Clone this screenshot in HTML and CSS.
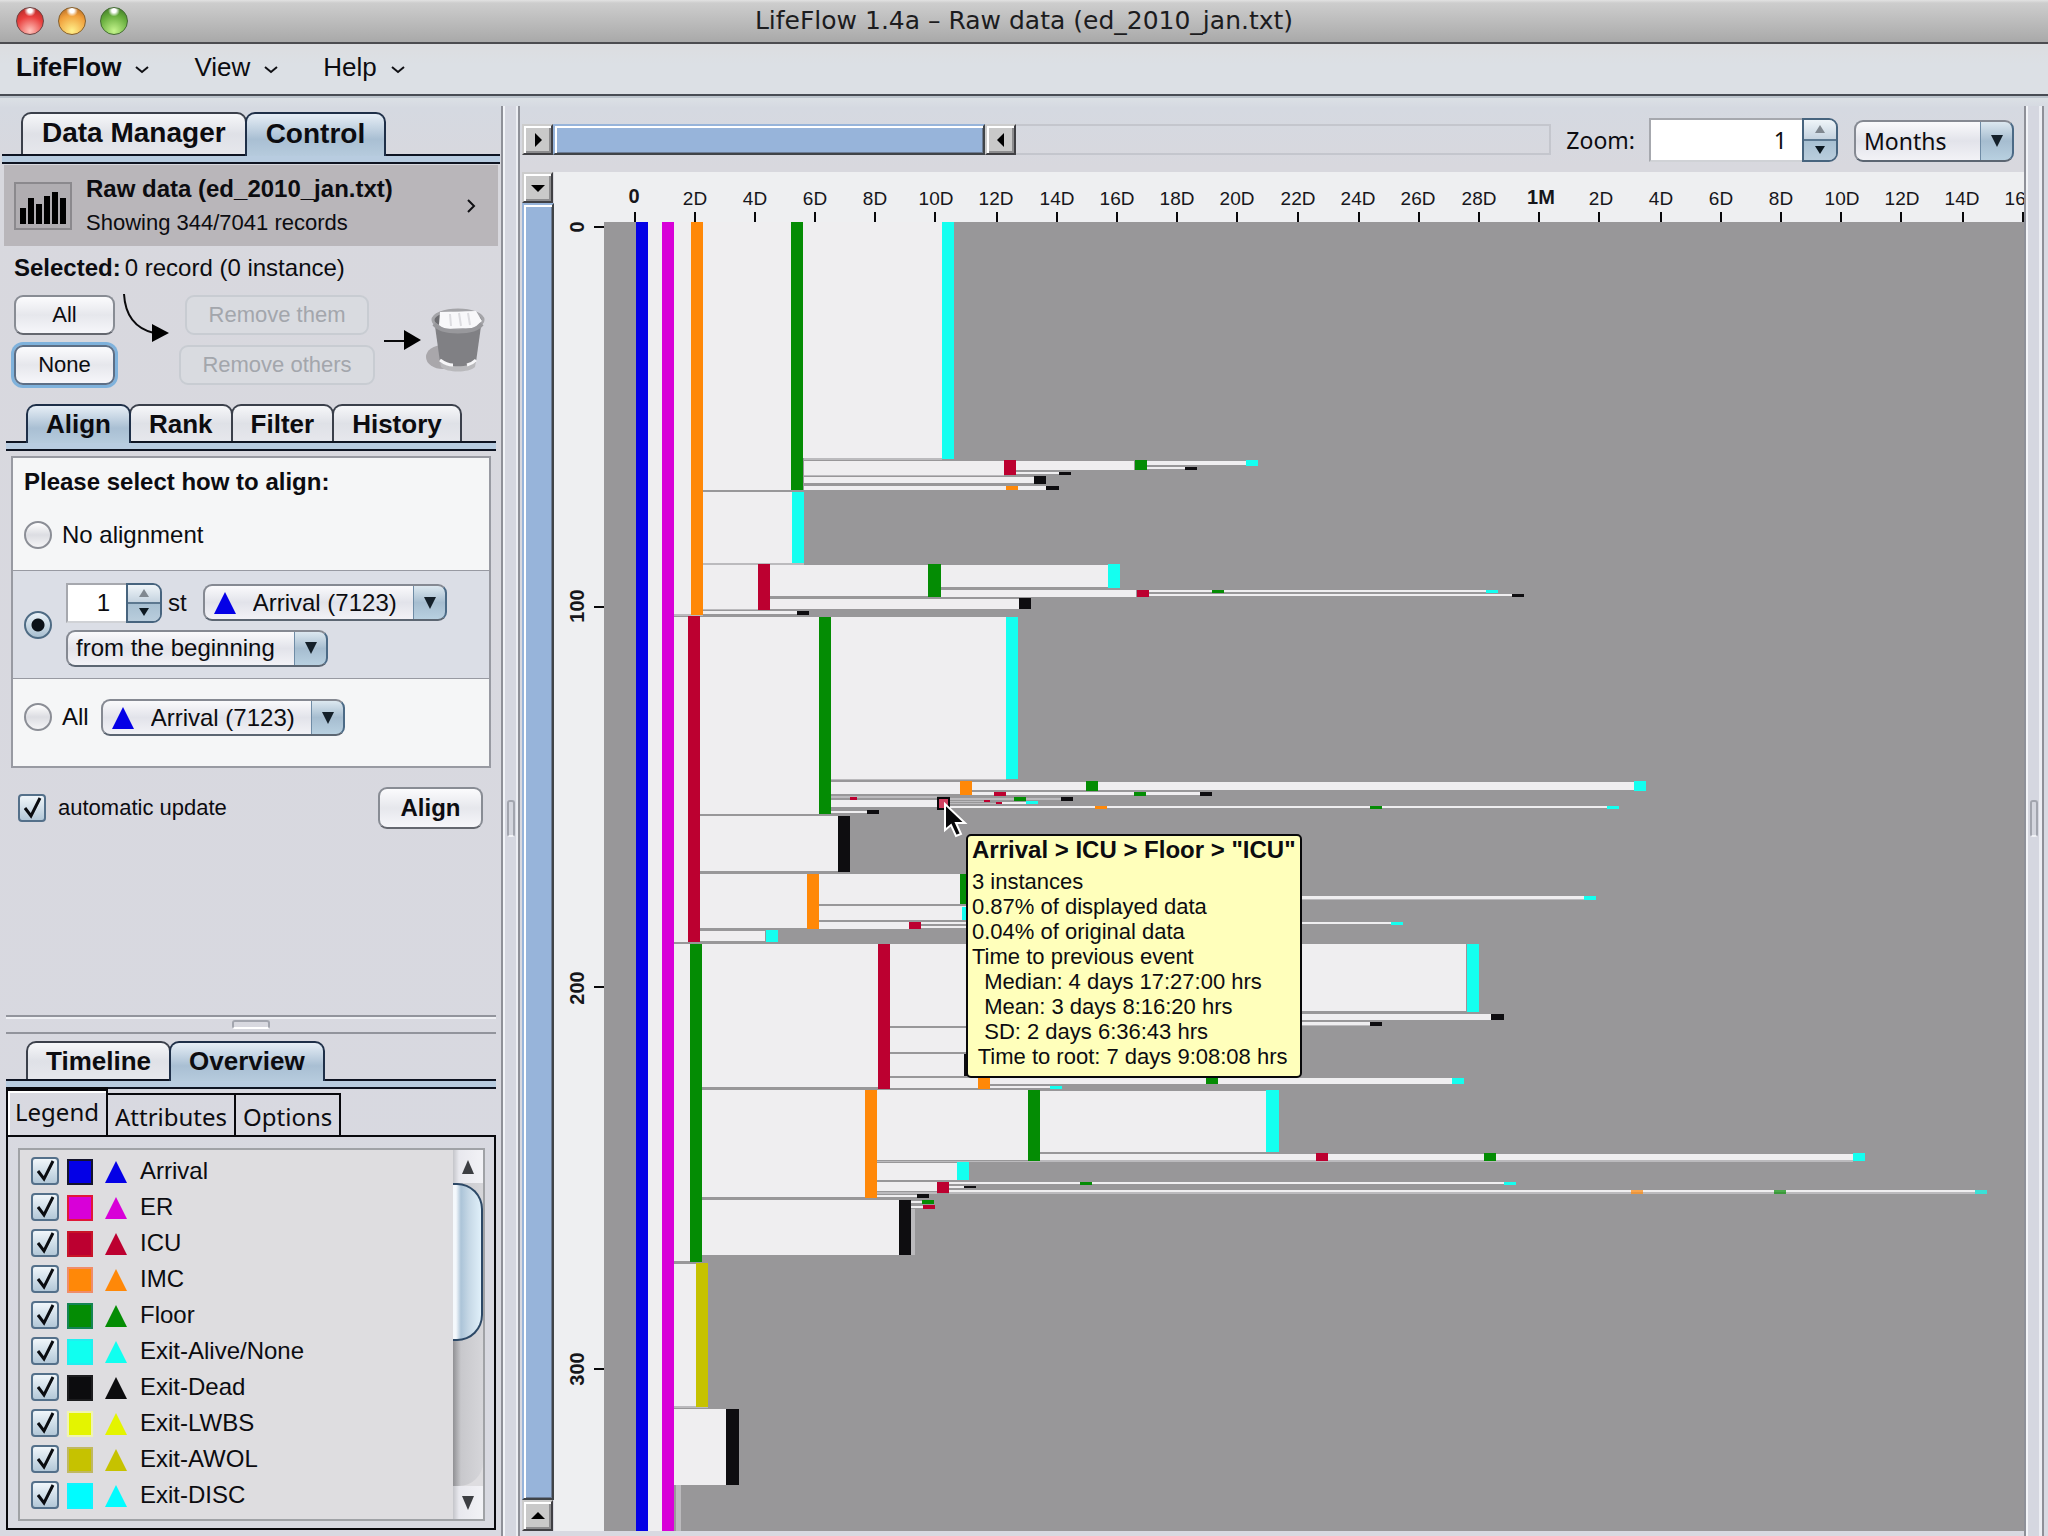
FILE: index.html
```html
<!DOCTYPE html>
<html lang="en">
<head>
<meta charset="utf-8">
<title>LifeFlow 1.4a – Raw data (ed_2010_jan.txt)</title>
<link rel="stylesheet" href="styles.css">
</head>
<body>
<header class="titlebar">
  <div class="lights">
    <button class="light red" aria-label="Close"></button>
    <button class="light amber" aria-label="Minimize"></button>
    <button class="light green" aria-label="Zoom window"></button>
  </div>
  <h1 class="window-title">LifeFlow 1.4a – Raw data (ed_2010_jan.txt)</h1>
</header>
<nav class="menubar">
  <button class="menu strong">LifeFlow <svg class="chevron" viewBox="0 0 14 8"><path d="M1 1l6 5 6-5"/></svg></button>
  <button class="menu">View <svg class="chevron" viewBox="0 0 14 8"><path d="M1 1l6 5 6-5"/></svg></button>
  <button class="menu">Help <svg class="chevron" viewBox="0 0 14 8"><path d="M1 1l6 5 6-5"/></svg></button>
</nav>
<main class="workspace">
  <aside class="sidebar">
    <section class="control-pane">
      <div class="tabs tabs-main" role="tablist">
        <button class="tab" role="tab">Data Manager</button>
        <button class="tab active" role="tab">Control</button>
      </div>
      <div class="tab-rule"></div>
      <div class="dataset">
        <svg class="bars-icon" viewBox="0 0 58 48"><rect x="1" y="1" width="56" height="46" fill="#b0adb1" stroke="#8b898d" stroke-width="2"/><path d="M6 26h6v16h-6zM14 16h6v26h-6zM22 22h6v20h-6zM30 14h6v28h-6zM38 10h6v32h-6zM46 16h6v26h-6z"/></svg>
        <div class="dataset-text">
          <strong class="dataset-name">Raw data (ed_2010_jan.txt)</strong>
          <span class="dataset-count">Showing 344/7041 records</span>
        </div>
        <svg class="go" viewBox="0 0 10 14"><path d="M2 1l6 6-6 6"/></svg>
      </div>
      <p class="selected"><strong>Selected:</strong> <span>0 record (0 instance)</span></p>
      <div class="selection">
        <div class="stack pick">
          <button class="btn">All</button>
          <button class="btn focused">None</button>
        </div>
        <svg class="arrow-curve" viewBox="0 0 60 60"><path d="M9 3c1 18 9 34 30 39" fill="none" stroke="#0a0a0c" stroke-width="2"/><path d="M37 33l17 9-17 9z"/></svg>
        <div class="stack remove">
          <button class="btn them" disabled>Remove them</button>
          <button class="btn" disabled>Remove others</button>
        </div>
        <svg class="arrow-straight" viewBox="0 0 38 20"><path d="M0 11h22" stroke="#0a0a0c" stroke-width="2"/><path d="M20 0l17 10-17 10z"/></svg>
        <svg class="trash" viewBox="0 0 60 66">
          <ellipse cx="18" cy="50" rx="17" ry="12" fill="#a9a7ab"/>
          <path d="M9 12l6 43c6 7 30 7 36 0l6-43z" fill="#808084"/>
          <path d="M15 54c6 7 30 7 36 0l-1 6c-6 6-28 6-34 0z" fill="#b9b9bc"/>
          <path d="M15 53c4 3 8 5 13 5M51 53c-3 3-5 4-9 5" stroke="#f6f6f8" stroke-width="3" fill="none"/>
          <ellipse cx="33" cy="13" rx="25" ry="10" fill="#6c6c70" stroke="#a4a4a8" stroke-width="3"/>
          <path d="M15 5l36-1 6 10-8 7-30 1-5-4z" fill="#f8f8fa"/>
          <path d="M25 7l1 12M34 6l2 13M43 6l2 12" stroke="#dcdce0" stroke-width="2"/>
          <path d="M9 17c8 10 40 10 48 0" stroke="#98989c" stroke-width="4" fill="none"/>
        </svg>
      </div>
      <div class="tabs tabs-tools" role="tablist">
        <button class="tab active" role="tab">Align</button>
        <button class="tab" role="tab">Rank</button>
        <button class="tab" role="tab">Filter</button>
        <button class="tab" role="tab">History</button>
      </div>
      <div class="tab-rule inset"></div>
      <form class="align-form">
        <fieldset class="align-box">
          <div class="align-row row-none">
            <h2 class="align-title">Please select how to align:</h2>
            <label class="choice"><input class="radio" type="radio" name="align"> No alignment</label>
          </div>
          <div class="align-row row-nth">
            <input class="radio" type="radio" name="align" checked aria-label="Align by occurrence">
            <div class="nth">
              <div class="nth-line">
                <span class="spinner spinner-small"><input class="spin-text" type="text" value="1" aria-label="Occurrence"><span class="spin-buttons"><button type="button" class="spin up" aria-label="Increase"></button><button type="button" class="spin down" aria-label="Decrease"></button></span></span>
                <span>st</span>
                <span class="combo-icon"><select class="combo with-icon" aria-label="Event type"><option>Arrival (7123)</option></select><svg class="combo-mark" viewBox="0 0 22 22"><path d="M11 0l11 22H0z"/></svg></span>
              </div>
              <select class="combo combo-from" aria-label="Direction"><option>from the beginning</option></select>
            </div>
          </div>
          <div class="align-row row-all">
            <label class="choice"><input class="radio" type="radio" name="align"> All</label>
            <span class="combo-icon"><select class="combo with-icon" aria-label="Event type for all"><option>Arrival (7123)</option></select><svg class="combo-mark" viewBox="0 0 22 22"><path d="M11 0l11 22H0z"/></svg></span>
          </div>
        </fieldset>
        <div class="align-foot">
          <label class="auto"><input class="check" type="checkbox" checked> automatic update</label>
          <button class="btn btn-align" type="button">Align</button>
        </div>
      </form>
    </section>
    <section class="overview-pane">
      <div class="splitter-h"><span class="grip-h"></span></div>
      <div class="tabs tabs-overview" role="tablist">
        <button class="tab" role="tab">Timeline</button>
        <button class="tab active" role="tab">Overview</button>
      </div>
      <div class="tab-rule inset"></div>
      <div class="subtabs" role="tablist">
        <button class="subtab current" role="tab">Legend</button>
        <button class="subtab" role="tab">Attributes</button>
        <button class="subtab" role="tab">Options</button>
      </div>
      <div class="legend-panel">
        <div class="legend-box">
          <ul class="legend">
            <li><label class="item arrival"><input class="check" type="checkbox" checked><i class="swatch"></i><svg class="mark" viewBox="0 0 22 22"><path d="M11 0l11 22H0z"/></svg>Arrival</label></li>
            <li><label class="item er"><input class="check" type="checkbox" checked><i class="swatch"></i><svg class="mark" viewBox="0 0 22 22"><path d="M11 0l11 22H0z"/></svg>ER</label></li>
            <li><label class="item icu"><input class="check" type="checkbox" checked><i class="swatch"></i><svg class="mark" viewBox="0 0 22 22"><path d="M11 0l11 22H0z"/></svg>ICU</label></li>
            <li><label class="item imc"><input class="check" type="checkbox" checked><i class="swatch"></i><svg class="mark" viewBox="0 0 22 22"><path d="M11 0l11 22H0z"/></svg>IMC</label></li>
            <li><label class="item floor"><input class="check" type="checkbox" checked><i class="swatch"></i><svg class="mark" viewBox="0 0 22 22"><path d="M11 0l11 22H0z"/></svg>Floor</label></li>
            <li><label class="item alive"><input class="check" type="checkbox" checked><i class="swatch"></i><svg class="mark" viewBox="0 0 22 22"><path d="M11 0l11 22H0z"/></svg>Exit-Alive/None</label></li>
            <li><label class="item dead"><input class="check" type="checkbox" checked><i class="swatch"></i><svg class="mark" viewBox="0 0 22 22"><path d="M11 0l11 22H0z"/></svg>Exit-Dead</label></li>
            <li><label class="item lwbs"><input class="check" type="checkbox" checked><i class="swatch"></i><svg class="mark" viewBox="0 0 22 22"><path d="M11 0l11 22H0z"/></svg>Exit-LWBS</label></li>
            <li><label class="item awol"><input class="check" type="checkbox" checked><i class="swatch"></i><svg class="mark" viewBox="0 0 22 22"><path d="M11 0l11 22H0z"/></svg>Exit-AWOL</label></li>
            <li><label class="item disc"><input class="check" type="checkbox" checked><i class="swatch"></i><svg class="mark" viewBox="0 0 22 22"><path d="M11 0l11 22H0z"/></svg>Exit-DISC</label></li>
          </ul>
          <div class="scrollbar">
            <button class="scroll-arrow" aria-label="Scroll up"><svg viewBox="0 0 12 14"><path d="M6 0l6 14H0z"/></svg></button>
            <div class="scroll-track"><div class="scroll-thumb"></div></div>
            <button class="scroll-arrow" aria-label="Scroll down"><svg viewBox="0 0 12 14"><path d="M6 14l6-14H0z"/></svg></button>
          </div>
        </div>
      </div>
    </section>
  </aside>
  <div class="splitter-v"><span class="grip-v"></span></div>
  <section class="viewer">
    <div class="toolbar">
      <div class="range range-x">
        <button class="bevel" aria-label="Range start"><svg viewBox="0 0 14 14"><path d="M4 0l7 7-7 7z"/></svg></button>
        <div class="range-thumb"></div>
        <button class="bevel" aria-label="Range end"><svg viewBox="0 0 14 14"><path d="M10 0l-7 7 7 7z"/></svg></button>
        <div class="range-rest"></div>
      </div>
      <label class="zoom-label" for="zoom">Zoom:</label>
      <span class="spinner spinner-large"><input class="spin-text" id="zoom" type="text" value="1"><span class="spin-buttons"><button class="spin up" aria-label="Increase zoom"></button><button class="spin down" aria-label="Decrease zoom"></button></span></span>
      <select class="combo combo-unit" aria-label="Time unit"><option>Months</option></select>
    </div>
    <div class="canvas">
      <div class="range range-y">
        <button class="bevel" aria-label="Range top"><svg viewBox="0 0 14 14"><path d="M0 4l7 7 7-7z"/></svg></button>
        <div class="range-thumb"></div>
        <button class="bevel" aria-label="Range bottom"><svg viewBox="0 0 14 14"><path d="M0 10l7-7 7 7z"/></svg></button>
      </div>
      <div class="plot">
        <svg class="chart" width="100%" height="100%">
          <rect class="field" x="50" y="50" width="100%" height="100%"/>
          <g transform="translate(-554 -172)">
            <path class="ticks" d="M634 212h2v10h-2zM694 212h2v10h-2zM754 212h2v10h-2zM814 212h2v10h-2zM874 212h2v10h-2zM934 212h2v10h-2zM996 212h2v10h-2zM1056 212h2v10h-2zM1116 212h2v10h-2zM1176 212h2v10h-2zM1236 212h2v10h-2zM1297 212h2v10h-2zM1358 212h2v10h-2zM1418 212h2v10h-2zM1478 212h2v10h-2zM1538 212h2v10h-2zM1598 212h2v10h-2zM1660 212h2v10h-2zM1720 212h2v10h-2zM1780 212h2v10h-2zM1840 212h2v10h-2zM1900 212h2v10h-2zM1962 212h2v10h-2zM2022 212h2v10h-2zM594 226h10v2h-10zM594 606h10v2h-10zM594 986h10v2h-10zM594 1368h10v2h-10z"/>
            <g class="axis">
              <text class="major" x="634" y="203">0</text>
              <text x="695" y="205">2D</text><text x="755" y="205">4D</text><text x="815" y="205">6D</text><text x="875" y="205">8D</text><text x="936" y="205">10D</text><text x="996" y="205">12D</text><text x="1057" y="205">14D</text><text x="1117" y="205">16D</text><text x="1177" y="205">18D</text><text x="1237" y="205">20D</text><text x="1298" y="205">22D</text><text x="1358" y="205">24D</text><text x="1418" y="205">26D</text><text x="1479" y="205">28D</text>
              <text class="major" x="1541" y="204">1M</text>
              <text x="1601" y="205">2D</text><text x="1661" y="205">4D</text><text x="1721" y="205">6D</text><text x="1781" y="205">8D</text><text x="1842" y="205">10D</text><text x="1902" y="205">12D</text><text x="1962" y="205">14D</text><text x="2022" y="205">16D</text>
              <text class="major" transform="translate(584 227) rotate(-90)">0</text>
              <text class="major" transform="translate(584 606) rotate(-90)">100</text>
              <text class="major" transform="translate(584 988) rotate(-90)">200</text>
              <text class="major" transform="translate(584 1369) rotate(-90)">300</text>
            </g>
            <!-- paths between events -->
            <path class="flow" d="M648 222h14v1309h-14zM674 222h17v392h-17zM703 222h88v268h-88zM803 222h139v236h-139z
              M804 461h200v14h-200zM1016 461h118v9h-118zM1147 461h99v4h-99zM1147 467h38v2h-38zM1016 472h43v2h-43zM804 477h230v6h-230zM804 486h242v4h-242z
              M703 492h89v71h-89zM703 565h55v44h-55zM770 565h158v31h-158zM941 565h167v22h-167zM941 590h195v7h-195zM1149 590h337v2h-337zM1149 594h363v2h-363zM770 599h249v10h-249zM703 611h94v3h-94z
              M674 617h14v325h-14zM700 617h119v197h-119zM831 617h175v162h-175z
              M831 782h129v12h-129zM972 782h662v8h-662zM972 792h228v3h-228zM831 800h106v7h-106zM949 806h658v2h-658zM1002 802h24v2h-24zM831 811h36v2h-36z
              M700 816h138v55h-138zM700 874h107v54h-107zM818 874h150v30h-150zM818 906h150v14h-150zM818 922h91v7h-91zM921 922h47v2h-47zM921 926h47v2h-47zM1300 896h284v3h-284zM1300 922h91v2h-91zM700 931h65v10h-65z
              M674 944h16v317h-16zM702 944h176v143h-176zM889 944h81v82h-81zM970 944h496v67h-496zM970 1014h521v6h-521zM970 1022h400v3h-400zM889 1028h80v24h-80zM889 1054h75v22h-75zM889 1078h89v10h-89zM990 1078h462v6h-462zM990 1086h60v2h-60z
              M702 1090h163v107h-163zM877 1090h151v70h-151zM1040 1091h226v61h-226zM1040 1154h813v6h-813zM877 1163h80v17h-80zM877 1182h61v9h-61zM949 1182h555v2h-555zM949 1186h15v2h-15zM949 1190h1026v2h-1026zM877 1195h40v2h-40z
              M702 1200h197v55h-197zM911 1201h11v2h-11zM911 1206h12v2h-12zM674 1264h22v142h-22zM674 1409h52v76h-52z"/>
            <path class="flow-faint" d="M831 779h175v1h-175zM831 796h106v2h-106zM949 798h112v2h-112zM949 801h35v1h-35zM949 803h47v1h-47zM949 1192h1026v2h-1026zM1300 899h284v1h-284zM1300 1025h70v1h-70zM1040 1160h813v2h-813zM911 1209h4v46h-4zM676 1485h5v46h-5zM804 458h138v2h-138zM703 563h101v2h-101zM703 609h67v1h-67zM674 614h29v2h-29zM804 475h200v1h-200zM674 1406h34v2h-34zM877 1161h163v1h-163zM877 1192h60v2h-60z"/>
            <!-- event bars -->
            <path class="c-arrival" d="M636 222h12v1309h-12z"/>
            <path class="c-er" d="M662 222h12v1309h-12z"/>
            <path class="c-imc" d="M691 222h12v393h-12zM1006 486h12v4h-12zM960 781h12v14h-12zM1095 806h12v3h-12zM807 874h12v55h-12zM978 1070h12v19h-12zM865 1090h12v108h-12z"/>
            <path class="c-floor" d="M791 222h12v268h-12zM1135 460h12v10h-12zM928 564h13v33h-13zM1212 590h12v3h-12zM819 617h12v197h-12zM1086 781h12v10h-12zM1134 792h12v4h-12zM1014 797h12v4h-12zM1370 806h12v3h-12zM960 874h12v30h-12zM690 944h12v318h-12zM1206 1070h12v14h-12zM1028 1090h12v71h-12zM1484 1153h12v8h-12zM1080 1182h12v3h-12zM922 1200h12v4h-12z"/>
            <path class="c-icu" d="M1004 460h12v15h-12zM758 564h12v46h-12zM1137 590h12v7h-12zM688 616h12v326h-12zM994 792h12v4h-12zM850 797h7v3h-7zM984 800h6v2h-6zM996 802h6v2h-6zM909 922h12v7h-12zM878 944h12v145h-12zM1316 1153h12v8h-12zM937 1182h12v11h-12zM923 1205h12v4h-12z"/>
            <path class="c-alive" d="M942 222h12v237h-12zM1246 460h12v6h-12zM792 492h12v71h-12zM1108 564h12v24h-12zM1486 590h12v3h-12zM1006 617h12v162h-12zM1634 781h12v10h-12zM1026 801h12v3h-12zM1607 806h12v3h-12zM962 907h12v13h-12zM1584 896h12v4h-12zM1391 922h12v3h-12zM766 930h12v12h-12zM1467 944h12v68h-12zM1452 1078h12v6h-12zM1050 1086h12v3h-12zM1266 1090h13v62h-13zM1853 1153h12v8h-12zM957 1162h12v18h-12zM1504 1182h12v3h-12z"/>
            <path class="c-dead" d="M1185 467h12v3h-12zM1059 472h12v3h-12zM1034 476h12v8h-12zM1046 486h13v4h-13zM1512 594h12v3h-12zM1019 598h12v11h-12zM797 611h12v4h-12zM1200 792h12v4h-12zM1061 797h12v4h-12zM867 810h12v4h-12zM838 816h12v56h-12zM1491 1014h13v6h-13zM1370 1022h12v4h-12zM964 1054h12v22h-12zM964 1186h12v2h-12zM917 1194h12v4h-12zM899 1200h12v55h-12zM726 1409h13v76h-13z"/>
            <path class="c-awol" d="M696 1263h12v144h-12z"/>
            <path class="c-imc faded" d="M1631 1190h12v4h-12z"/>
            <path class="c-floor faded" d="M1774 1190h12v4h-12z"/>
            <path class="c-alive faded" d="M1975 1190h12v4h-12z"/>
            <rect class="picked" x="938" y="798" width="11" height="11"/>
            <path class="pointer" d="M945 804v26l6-5 5 11 5-2-5-11h9z"/>
          </g>
        </svg>
        <div class="tooltip" role="tooltip">
          <strong class="tip-title">Arrival &gt; ICU &gt; Floor &gt; "ICU"</strong>
          <pre class="tip-body">3 instances
0.87% of displayed data
0.04% of original data
Time to previous event
  Median: 4 days 17:27:00 hrs
  Mean: 3 days 8:16:20 hrs
  SD: 2 days 6:36:43 hrs
 Time to root: 7 days 9:08:08 hrs</pre>
        </div>
      </div>
    </div>
  </section>
  <div class="splitter-v splitter-edge"><span class="grip-v"></span></div>
</main>
</body>
</html>
```
FILE: styles.css
```css
* { box-sizing: border-box; }

body {
  margin: 0;
  height: 100vh;
  display: flex;
  flex-direction: column;
  overflow: hidden;
  background: #d8d9e0;
  color: #0c0c10;
  font: 24px/26px "Liberation Sans", Arial, sans-serif;
}

button, input, select { font: inherit; color: inherit; margin: 0; padding: 0; border: 0; background: none; }
h1, h2, p, ul, pre, fieldset { margin: 0; padding: 0; border: 0; }
svg { display: block; flex: none; }

/* window frame */
.titlebar {
  height: 44px;
  display: grid;
  grid-template-columns: 1fr auto 1fr;
  align-items: center;
  background: linear-gradient(#e2e2e2 0, #cdcdcd 3px, #a9a9a9);
  border-bottom: 2px solid #4c4c50;
}
.lights { display: flex; gap: 14px; padding-left: 16px; }
.light { width: 28px; height: 28px; border-radius: 50%; border: 1px solid #6b4444; }
.red { background: radial-gradient(circle at 50% 10%, #fff 0 8%, transparent 22%), radial-gradient(circle at 50% 88%, #ffc4bc, #e9403e 55%, #a82420); }
.amber { background: radial-gradient(circle at 50% 10%, #fff 0 8%, transparent 22%), radial-gradient(circle at 50% 88%, #fff08a, #f0a03c 60%, #a85c1c); border-color: #86602c; }
.green { background: radial-gradient(circle at 50% 10%, #fff 0 8%, transparent 22%), radial-gradient(circle at 50% 88%, #c4f48c, #66ac3c 60%, #346c20); border-color: #446c34; }
.window-title { font: 25px/32px "DejaVu Sans", sans-serif; color: #1c1c1e; }

.menubar {
  height: 52px;
  display: flex;
  align-items: flex-start;
  gap: 45px;
  padding: 8px 16px;
  background: linear-gradient(#dcdde0, #dce0e5 20px);
  border-bottom: 2px solid #484c54;
}
.menu { display: flex; align-items: center; gap: 14px; font-size: 26px; line-height: 30px; }
.strong { font-weight: bold; }
.chevron { width: 14px; height: 8px; margin-top: 5px; fill: none; stroke: #101014; stroke-width: 2; }

.workspace {
  flex: 1;
  min-height: 0;
  display: grid;
  grid-template-columns: 501px 19px minmax(0, 1fr) 24px;
  background: linear-gradient(#bcc4cc 0 2px, #dbe0e5 2px, #d5d9e1 12px, #d8d8de 70px, #d8d9e1);
}

/* splitters */
.splitter-v {
  margin-top: 10px;
  display: flex;
  justify-content: center;
  background: linear-gradient(90deg, #8e9098 0 2px, #f2f4f8 2px 4px, #d5d7e0 4px 15px, #eceef3 15px 17px, #8e9098 17px);
}
.splitter-edge { background: linear-gradient(90deg, #8e9098 0 2px, #f2f4f8 2px 4px, #d5d7e0 4px 15px, #eceef3 15px 18px, #8e9098 18px 20px, #d8dae2 20px); padding-right: 4px; }
.grip-v { width: 8px; height: 37px; margin-top: 694px; border: 2px solid #a2a5ae; border-radius: 3px; background: #d4d6de; border-bottom-color: #f0f1f5; }
.splitter-h { height: 19px; margin: 0 5px 0 6px; border-top: 2px solid #92949c; border-bottom: 2px solid #92949c; box-shadow: inset 0 2px #eff0f4; display: flex; justify-content: center; align-items: center; }
.grip-h { width: 38px; height: 9px; border: 2px solid #a2a5ae; border-bottom-color: #fff; border-radius: 3px; }

/* tabs */
.sidebar { display: flex; flex-direction: column; min-height: 0; }
.tabs { display: flex; }
.tab {
  font-weight: bold;
  border: 2px solid #3a3f4a;
  border-bottom: 0;
  border-radius: 10px 10px 0 0;
  margin-right: -2px;
  background: linear-gradient(#f6f7f9, #dfe1e7 50%, #e6e7ec);
}
.tab.active { background: linear-gradient(#e6eef6, #a9bfd3 60%, #b6cbdd); border-color: #1e2f48; position: relative; margin-bottom: -2px; padding-bottom: 2px; }
.tabs-main { height: 42px; margin-top: 16px; padding-left: 21px; font-size: 28px; }
.tabs-main .tab { padding-inline: 19px; padding-bottom: 2px; }
.tabs-tools { height: 37px; margin-top: 19px; padding-left: 26px; font-size: 26px; }
.tabs-tools .tab { padding-inline: 18px; }
.tabs-overview { height: 38px; margin-top: 7px; padding-left: 26px; font-size: 26px; }
.tabs-overview .tab { padding-inline: 18px; }
.tab-rule { height: 10px; margin: 0 1px 0 2px; background: #b8cce0; border: solid #0e1422; border-width: 2px 0; }
.tab-rule.inset { margin: 0 5px 0 6px; }

/* dataset summary and selection */
.dataset { height: 81px; margin: 1px 3px 0 4px; padding: 0 22px 0 10px; display: flex; align-items: center; gap: 14px; background: #b9b6ba; }
.bars-icon { width: 58px; height: 48px; }
.dataset-text { flex: 1; display: flex; flex-direction: column; gap: 8px; }
.dataset-count { font-size: 22px; }
.go { width: 10px; height: 14px; fill: none; stroke: #101014; stroke-width: 2; }
.selected { display: flex; gap: 4px; padding: 9px 0 0 14px; }
.selection { margin-top: 14px; padding-left: 14px; display: flex; align-items: center; }
.stack { display: flex; flex-direction: column; gap: 10px; }
.pick { width: 101px; }
.arrow-curve { width: 60px; height: 60px; align-self: flex-start; margin-top: -4px; }
.remove { width: 204px; align-items: center; }
.remove .btn { width: 196px; }
.remove .them { width: 184px; }
.arrow-straight { width: 38px; height: 20px; margin-left: 5px; }
.trash { width: 60px; height: 66px; margin-left: 3px; }
.btn { height: 40px; font-size: 22px; border: 2px solid #888c94; border-bottom-color: #64676f; border-radius: 9px; background: linear-gradient(#fbfbfd, #e6e7ec 50%, #f6f6fa); }
.btn.focused { border-color: #5d6f86; box-shadow: 0 0 0 3px #7fb2dc; }
.btn:disabled { color: #a3a6ac; border: 2px solid #c8ccd2; background: #d9dbe0; }

/* align form */
.align-box { margin: 5px 10px 0 11px; border: 2px solid #989aa2; }
.align-row { display: flex; align-items: center; gap: 10px; background: #f5f6f7; padding-left: 11px; }
.row-none { height: 112px; flex-direction: column; align-items: flex-start; gap: 22px; padding-top: 11px; }
.align-title { font-size: 24px; }
.row-nth { height: 109px; background: #dbdee6; border: solid #989aa2; border-width: 1px 0; gap: 14px; }
.row-all { height: 87px; align-items: flex-start; padding-top: 20px; gap: 12px; }
.choice { display: flex; align-items: center; gap: 10px; height: 36px; }
.radio { appearance: none; width: 28px; height: 28px; border: 2px solid #8b8e96; border-radius: 50%; background: linear-gradient(#fff, #dcdde2 50%, #f4f4f6); flex: none; }
.radio:checked { border-color: #4e6b84; background: radial-gradient(circle, #0c1218 0 6px, transparent 7px), linear-gradient(#eaf2f8, #a9bfd0); }
.nth { display: flex; flex-direction: column; gap: 7px; align-items: flex-start; }
.nth-line { display: flex; align-items: center; gap: 6px; }
.nth-line .combo-icon { margin-left: 10px; }
.spinner { display: flex; }
.spin-text { background: #fff; border: 2px solid #a6a8ae; border-right: 0; border-bottom-color: #d0d2d6; text-align: right; min-width: 0; }
.spinner-small { width: 96px; height: 40px; }
.spinner-small .spin-text { width: 60px; padding-right: 16px; }
.spin-buttons { display: flex; flex-direction: column; width: 36px; border: 2px solid #47647e; border-radius: 0 9px 9px 0; overflow: hidden; }
.spin { flex: 1; background: no-repeat center / 10px 8px, linear-gradient(#eff5f9, #c5d3df); }
.spin.up { border-bottom: 2px solid #5c7890; background-image: url('data:image/svg+xml,<svg xmlns="http://www.w3.org/2000/svg" viewBox="0 0 10 8"><path d="M5 0l5 8H0z" fill="%23808890"/></svg>'), linear-gradient(#eff5f9, #c5d3df); background-size: 10px 8px, 100% 100%; }
.spin.down { background-image: url('data:image/svg+xml,<svg xmlns="http://www.w3.org/2000/svg" viewBox="0 0 10 8"><path d="M0 0h10L5 8z" fill="%230c1820"/></svg>'), linear-gradient(#a8c0d2, #b9cddc); background-size: 10px 8px, 100% 100%; }
.combo {
  appearance: none;
  height: 37px;
  padding-left: 8px;
  border: 2px solid #858992;
  border-right-color: #4b6a86;
  border-bottom-color: #5c6672;
  border-radius: 9px;
  background:
    url('data:image/svg+xml,<svg xmlns="http://www.w3.org/2000/svg" viewBox="0 0 12 12"><path d="M0 0h12L6 12z" fill="%2314202a"/></svg>') no-repeat right 9px center / 12px 12px,
    linear-gradient(#6f8ca6, #6f8ca6) no-repeat right 31px top / 1px 100%,
    linear-gradient(#dce8f0, #a6bdd0 50%, #b8d0e0) no-repeat right / 31px 100%,
    linear-gradient(#fafafc, #e2e3ea 50%, #f2f2f6);
}
.combo-icon { display: grid; align-items: center; }
.combo-icon > * { grid-area: 1 / 1; }
.with-icon { width: 244px; padding-left: 48px; }
.combo-mark { width: 22px; height: 22px; margin-left: 11px; fill: #0400e6; pointer-events: none; }
.combo-from { width: 262px; }
.align-foot { display: flex; justify-content: space-between; align-items: center; padding: 19px 18px 0 18px; }
.auto { display: flex; align-items: center; gap: 12px; font-size: 22px; }
.btn-align { width: 105px; height: 42px; font-size: 24px; font-weight: bold; }
.check {
  appearance: none;
  width: 28px;
  height: 28px;
  flex: none;
  border: 2px solid #54708a;
  border-radius: 4px;
  background: url('data:image/svg+xml,<svg xmlns="http://www.w3.org/2000/svg" viewBox="0 0 24 24"><path d="M5 12l6 8L20 2" fill="none" stroke="%230a0c10" stroke-width="3"/></svg>') center / 24px 24px, linear-gradient(#f0f6fa, #b3c8d8);
}

/* legend */
.overview-pane { margin-top: auto; padding-bottom: 6px; }
.subtabs { height: 48px; margin: -2px 5px 0 6px; display: flex; align-items: flex-end; font: 24px/30px "Noto Sans", sans-serif; position: relative; }
.subtab { height: 42px; border: solid #08080c; border-width: 2px 2px 0 0; padding: 4px 7px 0; }
.subtab.current { height: 48px; border-width: 4px 2px 0 2px; padding: 0 7px 3px; box-shadow: inset 2px 2px #fff; }
.legend-panel { margin: 0 5px 0 6px; padding: 11px 9px 7px 10px; border: 2px solid #08080c; }
.legend-box { display: flex; border: 2px solid #a0a2a6; background: #dedde0; }
.legend { flex: 1; list-style: none; padding: 3px 0 6px 11px; }
.item { height: 36px; display: flex; align-items: center; color: #0c0c10; }
.swatch { width: 26px; height: 26px; margin: 2px 12px 0 8px; background: var(--c); border: 2px solid var(--edge); }
.mark { width: 22px; height: 22px; margin: 2px 13px 0 0; fill: var(--c); }
.arrival { --c: #0400e6; --edge: #14142c; }
.er { --c: #d800d8; --edge: #e01838; }
.icu { --c: #bc0030; --edge: #c81428; }
.imc { --c: #ff8808; --edge: #f08c68; }
.floor { --c: #048c04; --edge: #148454; }
.alive { --c: #10fff0; --edge: #20f0f0; }
.dead { --c: #0c0c0e; --edge: #1c1c1e; }
.lwbs { --c: #e4f400; --edge: #f0f4b0; }
.awol { --c: #c6c200; --edge: #c0b860; }
.disc { --c: #00fcff; --edge: #10f4ff; }
.scrollbar { width: 30px; display: flex; flex-direction: column; }
.scroll-arrow { height: 33px; display: grid; place-items: center; background: linear-gradient(90deg, #c4c5ca, #e8e8ee 6px, #f2f2f6); fill: #3c3e42; }
.scroll-arrow svg { width: 12px; height: 14px; }
.scroll-track { flex: 1; background: linear-gradient(90deg, #909094, #c8c8cc 8px, #d6d6da); border-radius: 0 0 24px 0; }
.scroll-thumb { height: 52%; border: 2px solid #2c4866; border-left: 0; border-radius: 0 26px 26px 0; background: linear-gradient(90deg, #f4f8fc 0 3px, #acc4d8 8px, #c6d8e6 16px, #e0f0fa); }

/* viewer */
.viewer { display: flex; flex-direction: column; min-width: 0; padding: 22px 0 5px 2px; }
.toolbar { display: flex; align-items: center; height: 43px; margin-bottom: 11px; padding-right: 10px; font: 23px/30px "Noto Sans", sans-serif; }
.range { display: flex; }
.range-x { flex: 1; height: 31px; }
.range-x .range-thumb { width: 42%; }
.range-rest { flex: 1; border: 2px solid #c4c6cd; border-left: 0; }
.bevel { flex: none; width: 31px; height: 31px; display: grid; place-items: center; background: #c9c9c9; border: 2px solid; border-color: #ccc #404044 #404044 #ccc; box-shadow: inset 2px 2px #fff, inset -2px -2px #8c8c8e; }
.bevel svg { width: 14px; height: 14px; }
.range-thumb { background: #97b4da; border: 2px solid; border-color: #97b4da #404448 #404448 #97b4da; box-shadow: inset 2px 2px #fff, inset -1px -1px #6c7c94; }
.zoom-label { margin: 0 14px 0 15px; }
.spinner-large { width: 189px; height: 44px; }
.spinner-large .spin-text { flex: 1; padding-right: 15px; }
.combo-unit { width: 160px; height: 42px; margin: 2px 0 0 16px; }
.canvas { flex: 1; min-height: 0; display: flex; }
.range-y { flex-direction: column; width: 32px; }
.range-y .range-thumb { flex: 1; }
.plot { flex: 1; min-width: 0; position: relative; background: #eeeff1; }
.chart { overflow: hidden; }
.field { fill: #989799; }
.ticks { fill: #08080a; }
.axis text { font-size: 19px; text-anchor: middle; fill: #16161a; }
.axis .major { font-size: 20px; font-weight: bold; }
.flow { fill: #efeef0; }
.flow-faint { fill: #bbbabd; }
.c-arrival { fill: #0400e6; }
.c-er { fill: #d800d8; }
.c-imc { fill: #ff8808; }
.c-floor { fill: #048c04; }
.c-icu { fill: #bc0030; }
.c-alive { fill: #14fff0; }
.c-dead { fill: #0e0d10; }
.c-awol { fill: #c6c200; }
.faded { opacity: .7; }
.picked { fill: #d04060; stroke: #08080a; stroke-width: 2; }
.pointer { fill: #060608; stroke: #fff; stroke-width: 2; }

.tooltip {
  position: absolute;
  left: 412px;
  top: 662px;
  width: 336px;
  height: 244px;
  padding: 1px 4px;
  background: #ffffbb;
  border: 2px solid #08080a;
  border-radius: 5px;
}
.tip-title { display: block; }
.tip-body { margin-top: 6px; font: 22px/25px "Liberation Sans", Arial, sans-serif; }
```
